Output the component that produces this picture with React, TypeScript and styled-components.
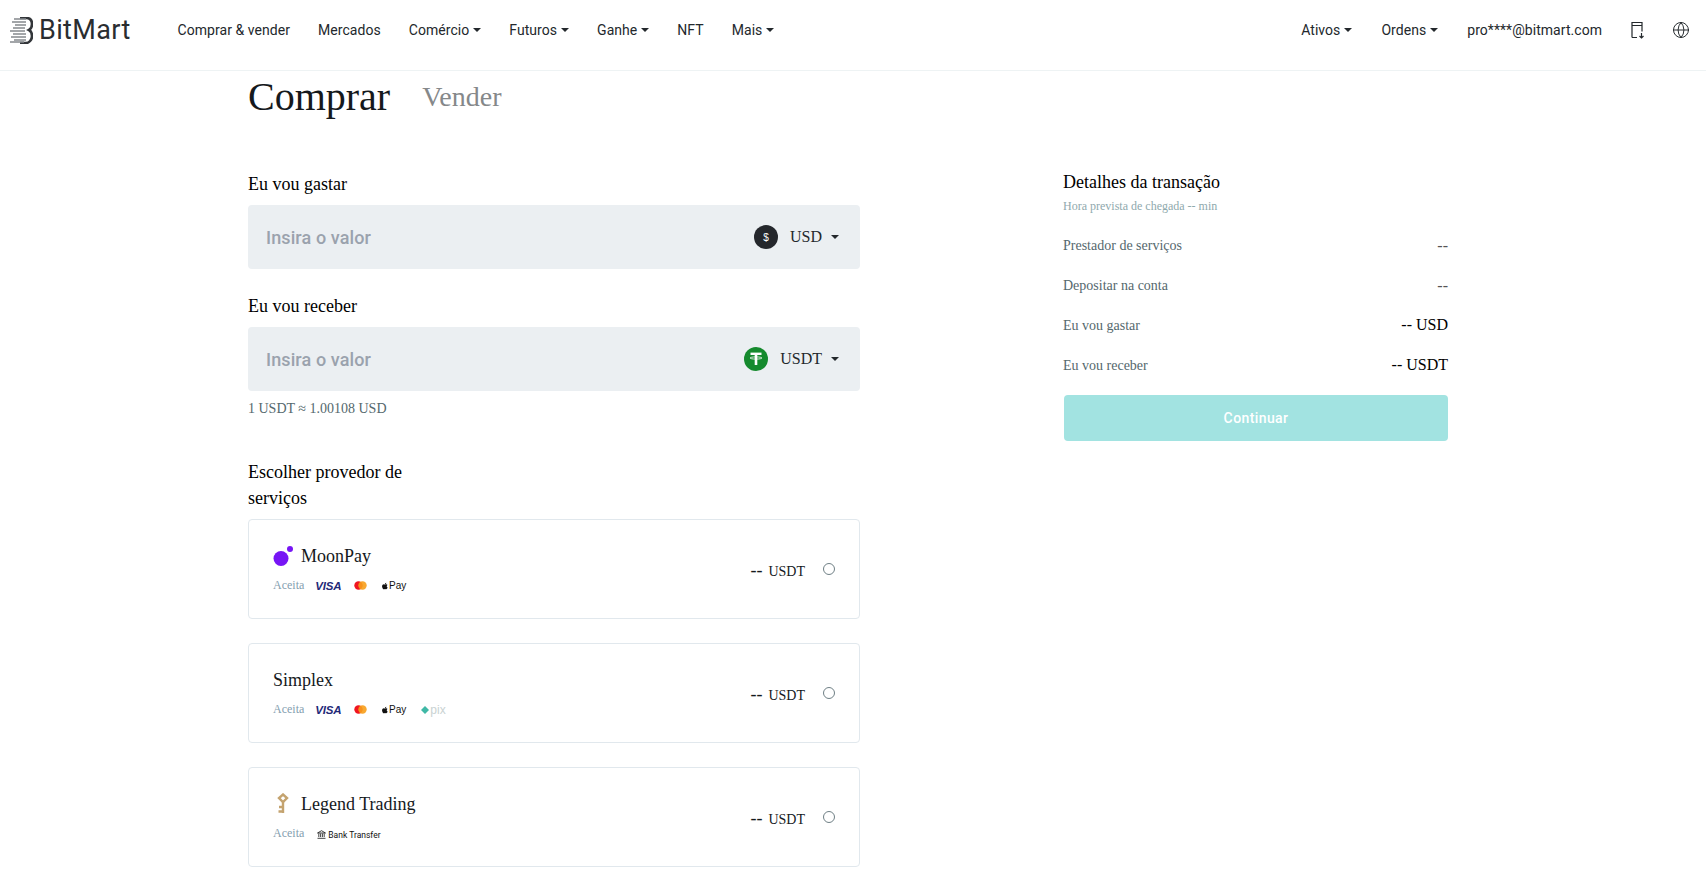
import styled, { createGlobalStyle } from 'styled-components';
import { Globe } from 'lucide-react';
import { FaApple } from 'react-icons/fa';

const GlobalStyle = createGlobalStyle`
  * {
    box-sizing: border-box;
  }

  body {
    margin: 0;
    background: #fff;
    color: #1c2327;
    font-family: 'Liberation Serif', 'Times New Roman', serif;
  }
`;

const Header = styled.header`
  display: flex;
  align-items: center;
  justify-content: space-between;
  height: 71px;
  padding: 0 16px 10px 10px;
  border-bottom: 1px solid #eef3f4;
  font-family: Roboto, 'Open Sans', sans-serif;
`;

const Group = styled.div`
  display: flex;
  align-items: center;
`;

const Brand = styled.div`
  display: flex;
  align-items: center;
  gap: 6px;
  margin-right: 47px;
`;

const BrandName = styled.span`
  font-size: 27px;
  color: #2a2d30;
  letter-spacing: 0.35px;
`;

const Nav = styled.nav<{ $gap: number }>`
  display: flex;
  align-items: center;
  gap: ${(p) => p.$gap}px;
`;

const NavItem = styled.a`
  display: flex;
  align-items: center;
  gap: 4px;
  font-size: 14px;
  letter-spacing: 0.05px;
  color: #23282c;
  white-space: nowrap;
`;

const Caret = styled.i`
  width: 0;
  height: 0;
  border-left: 4px solid transparent;
  border-right: 4px solid transparent;
  border-top: 4px solid #23282c;
`;

const IconSlot = styled.span<{ $pull?: number }>`
  display: flex;
  align-items: center;
  margin-left: ${(p) => -(p.$pull ?? 0)}px;
`;

const Main = styled.main`
  padding: 3px 0 0 248px;
`;

const Tabs = styled.div`
  display: flex;
  align-items: center;
  gap: 32px;
  height: 46px;
  margin-bottom: 50px;
`;

const ActiveTab = styled.h1`
  margin: 0;
  font-size: 40px;
  font-weight: 400;
  line-height: 46px;
  color: #15191c;
`;

const IdleTab = styled.span`
  font-size: 28px;
  line-height: 46px;
  color: #85888a;
`;

const Columns = styled.div`
  display: flex;
  justify-content: space-between;
  width: 1200px;
`;

const FormColumn = styled.section`
  width: 612px;
  padding-top: 2px;
`;

const FieldLabel = styled.label`
  display: block;
  font-size: 18px;
  line-height: 24px;
  color: #000;
  margin-bottom: 9px;
`;

const Field = styled.div`
  display: flex;
  align-items: center;
  height: 64px;
  padding: 0 21px 0 16px;
  margin-bottom: 25px;
  background: #ebeff2;
  border-radius: 4px;
`;

const AmountInput = styled.input`
  flex: 1;
  min-width: 0;
  border: 0;
  outline: 0;
  background: transparent;
  font-family: Roboto, sans-serif;
  font-size: 18px;
  font-weight: 500;
  letter-spacing: 0.1px;

  &::placeholder {
    color: #9aa2ad;
    opacity: 1;
  }
`;

const Currency = styled.div`
  display: flex;
  align-items: center;
  font-size: 16px;
  color: #23282c;

  ${Caret} {
    margin-left: 9px;
  }
`;

const Coin = styled.span<{ $bg: string }>`
  display: flex;
  align-items: center;
  justify-content: center;
  width: 24px;
  height: 24px;
  margin-right: 12px;
  border-radius: 50%;
  background: ${(p) => p.$bg};
  color: #fff;
  font-family: 'Liberation Sans', sans-serif;
  font-size: 10px;
`;

const Rate = styled.p`
  margin: -17px 0 0;
  font-size: 14px;
  line-height: 20px;
  color: #55686d;
`;

const ProviderHeading = styled.h2`
  width: 170px;
  margin: 40px 0 8px;
  font-size: 18px;
  font-weight: 400;
  line-height: 26px;
  color: #000;
`;

const ProviderList = styled.div`
  display: flex;
  flex-direction: column;
  gap: 24px;
`;

const Card = styled.div`
  display: flex;
  align-items: center;
  justify-content: space-between;
  height: 100px;
  padding: 0 24px;
  border: 1px solid #e1e8ed;
  border-radius: 4px;
`;

const CardInfo = styled.div`
  padding-bottom: 2px;
`;

const NameRow = styled.div`
  display: flex;
  align-items: center;
  gap: 8px;
  font-size: 18px;
  line-height: 26px;
  color: #15191c;
`;

const AcceptRow = styled.div`
  display: flex;
  align-items: center;
  gap: 15px;
  height: 16px;
  margin-top: 9px;
`;

const Accepts = styled.span`
  margin-right: -4px;
  font-size: 12px;
  color: #84a0b0;
`;

const VisaMark = styled.span`
  width: 24px;
  font-family: 'Liberation Sans', sans-serif;
  font-size: 11.5px;
  font-weight: 700;
  font-style: italic;
  letter-spacing: -0.2px;
  color: #1f2a78;
`;

const PayMark = styled.span`
  display: flex;
  align-items: center;
  gap: 1px;
  width: 24px;
  font-family: 'Liberation Sans', sans-serif;
  font-size: 10px;
  color: #111;
`;

const PixMark = styled.span`
  display: flex;
  align-items: center;
  gap: 1px;
  font-family: 'Liberation Sans', sans-serif;
  font-size: 12px;
  line-height: 12px;
  color: #c9d2d2;
`;

const BankMark = styled.span`
  display: flex;
  align-items: center;
  gap: 2px;
  margin: 2px 0 0 2px;
  font-family: Roboto, sans-serif;
  font-size: 8.5px;
  color: #111;
`;

const CardSide = styled.div`
  display: flex;
  align-items: center;
  gap: 18px;
  padding-top: 2px;
`;

const Amount = styled.span`
  font-size: 14px;
  color: #15191c;

  b {
    margin-right: 6px;
    font-size: 18px;
    font-weight: 400;
  }
`;

const Radio = styled.span`
  width: 12px;
  height: 12px;
  margin-top: -3px;
  border: 1px solid #6f7f85;
  border-radius: 50%;
`;

const Summary = styled.aside`
  width: 385px;
`;

const SummaryTitle = styled.h3`
  margin: 0;
  font-size: 18px;
  font-weight: 400;
  line-height: 24px;
  color: #000;
`;

const Eta = styled.p`
  margin: 4px 0 12px;
  font-size: 12px;
  line-height: 16px;
  color: #8fa9ad;
`;

const SummaryRow = styled.div`
  display: flex;
  align-items: center;
  justify-content: space-between;
  height: 40px;
  font-size: 14px;
  color: #55686d;
`;

const SummaryValue = styled.span<{ $strong?: boolean }>`
  margin-bottom: ${(p) => (p.$strong ? 2 : 0)}px;
  font-size: 16px;
  color: ${(p) => (p.$strong ? '#000' : '#555')};
`;

const ContinueButton = styled.button`
  display: block;
  width: 384px;
  height: 46px;
  margin: 9px 0 0 1px;
  border: 0;
  border-radius: 4px;
  background: #a2e3e1;
  color: #fff;
  font-family: Roboto, sans-serif;
  font-size: 14px;
  font-weight: 500;
  letter-spacing: 0.4px;
`;

const BitMartMark = () => (
  <svg width="23" height="27" viewBox="0 0 23 27" fill="none">
    <path d="M10 1h6c4 0 6 2 6 6 0 3-1 5-3 6 2 1 3 3 3 6 0 4-3 7-6 7H10" stroke="#33363a" strokeWidth="2.6" />
    <path
      d="M4 2h12M2 5h14M5 8h11M3 11h12M0 14h15M3 17h13M1 20h15M4 23h12M0 25h14"
      stroke="#85898d"
      strokeWidth="1.6"
    />
  </svg>
);

const AppDownload = () => (
  <svg width="14" height="18" viewBox="0 0 14 18" fill="none" stroke="#23282c" strokeWidth="1.2">
    <path d="M1 16.5V1.5h10v9M1 4.5h10M1 16.5h5" />
    <path d="M10.5 12v5M8.5 15l2 2 2-2" />
  </svg>
);

const MoonPayMark = () => (
  <svg width="20" height="20" viewBox="0 0 20 20" fill="#7715f5">
    <circle cx="8" cy="12.5" r="7.5" />
    <circle cx="17" cy="3" r="3" />
  </svg>
);

const KeyMark = () => (
  <svg width="20" height="22" viewBox="0 0 20 22" fill="none" stroke="#c4a36f" strokeWidth="2.4">
    <path d="M10 1.5l4 3.5-4 4-4-4z" />
    <path d="M10 9v11M10 14h-4M10 18.5H5.5" />
  </svg>
);

const MasterMark = () => (
  <svg width="13" height="9" viewBox="0 0 13 9">
    <circle cx="4.5" cy="4.5" r="4.2" fill="#f01520" />
    <circle cx="8.5" cy="4.5" r="4.2" fill="#f79e1b" opacity="0.9" />
  </svg>
);

const TetherMark = () => (
  <svg width="16" height="16" viewBox="0 0 16 16" fill="none" stroke="#fff">
    <path d="M2.5 2.8h11" strokeWidth="2.4" />
    <path d="M8 3v11" strokeWidth="2.6" />
    <ellipse cx="8" cy="7" rx="6" ry="1.1" strokeWidth="0.8" />
  </svg>
);

const Bank = () => (
  <svg width="9" height="9" viewBox="0 0 9 9" fill="none" stroke="#111" strokeWidth="0.8">
    <path d="M.5 3L4.5.7 8.5 3zM1.8 3.5V7M3.6 3.5V7M5.4 3.5V7M7.2 3.5V7M.5 8.3h8" />
  </svg>
);

const Pix = () => (
  <svg width="8" height="8" viewBox="0 0 9 9" fill="#3fb8a6">
    <path d="M4.5 0L9 4.5 4.5 9 0 4.5z" />
  </svg>
);

type Provider = {
  name: string;
  logo?: React.ReactNode;
  pix?: boolean;
  bank?: boolean;
};

const providers: Provider[] = [
  { name: 'MoonPay', logo: <MoonPayMark /> },
  { name: 'Simplex', pix: true },
  { name: 'Legend Trading', logo: <KeyMark />, bank: true },
];

const summaryRows = [
  { label: 'Prestador de serviços', value: '--' },
  { label: 'Depositar na conta', value: '--' },
  { label: 'Eu vou gastar', value: '-- USD', strong: true },
  { label: 'Eu vou receber', value: '-- USDT', strong: true },
];

const App = () => (
  <>
    <GlobalStyle />
    <Header>
      <Group>
        <Brand>
          <BitMartMark />
          <BrandName>BitMart</BrandName>
        </Brand>
        <Nav $gap={28}>
          <NavItem>Comprar &amp; vender</NavItem>
          <NavItem>Mercados</NavItem>
          <NavItem>Comércio<Caret /></NavItem>
          <NavItem>Futuros<Caret /></NavItem>
          <NavItem>Ganhe<Caret /></NavItem>
          <NavItem>NFT</NavItem>
          <NavItem>Mais<Caret /></NavItem>
        </Nav>
      </Group>
      <Nav $gap={29}>
        <NavItem>Ativos<Caret /></NavItem>
        <NavItem>Ordens<Caret /></NavItem>
        <NavItem>pro****@bitmart.com</NavItem>
        <IconSlot><AppDownload /></IconSlot>
        <IconSlot $pull={2}><Globe size={18} strokeWidth={1.3} color="#23282c" /></IconSlot>
      </Nav>
    </Header>

    <Main>
      <Tabs>
        <ActiveTab>Comprar</ActiveTab>
        <IdleTab>Vender</IdleTab>
      </Tabs>

      <Columns>
        <FormColumn>
          <FieldLabel>Eu vou gastar</FieldLabel>
          <Field>
            <AmountInput placeholder="Insira o valor" />
            <Currency>
              <Coin $bg="#24272c">$</Coin>
              USD
              <Caret />
            </Currency>
          </Field>

          <FieldLabel>Eu vou receber</FieldLabel>
          <Field>
            <AmountInput placeholder="Insira o valor" />
            <Currency>
              <Coin $bg="#158a2e"><TetherMark /></Coin>
              USDT
              <Caret />
            </Currency>
          </Field>
          <Rate>1 USDT ≈ 1.00108 USD</Rate>

          <ProviderHeading>Escolher provedor de serviços</ProviderHeading>
          <ProviderList>
            {providers.map((provider) => (
              <Card key={provider.name}>
                <CardInfo>
                  <NameRow>
                    {provider.logo}
                    {provider.name}
                  </NameRow>
                  <AcceptRow>
                    <Accepts>Aceita</Accepts>
                    {provider.bank ? (
                      <BankMark><Bank />Bank Transfer</BankMark>
                    ) : (
                      <>
                        <VisaMark>VISA</VisaMark>
                        <MasterMark />
                        <PayMark><FaApple size={10} />Pay</PayMark>
                      </>
                    )}
                    {provider.pix && <PixMark><Pix />pix</PixMark>}
                  </AcceptRow>
                </CardInfo>
                <CardSide>
                  <Amount><b>--</b>USDT</Amount>
                  <Radio />
                </CardSide>
              </Card>
            ))}
          </ProviderList>
        </FormColumn>

        <Summary>
          <SummaryTitle>Detalhes da transação</SummaryTitle>
          <Eta>Hora prevista de chegada -- min</Eta>
          {summaryRows.map((row) => (
            <SummaryRow key={row.label}>
              {row.label}
              <SummaryValue $strong={row.strong}>{row.value}</SummaryValue>
            </SummaryRow>
          ))}
          <ContinueButton>Continuar</ContinueButton>
        </Summary>
      </Columns>
    </Main>
  </>
);

export default App;
